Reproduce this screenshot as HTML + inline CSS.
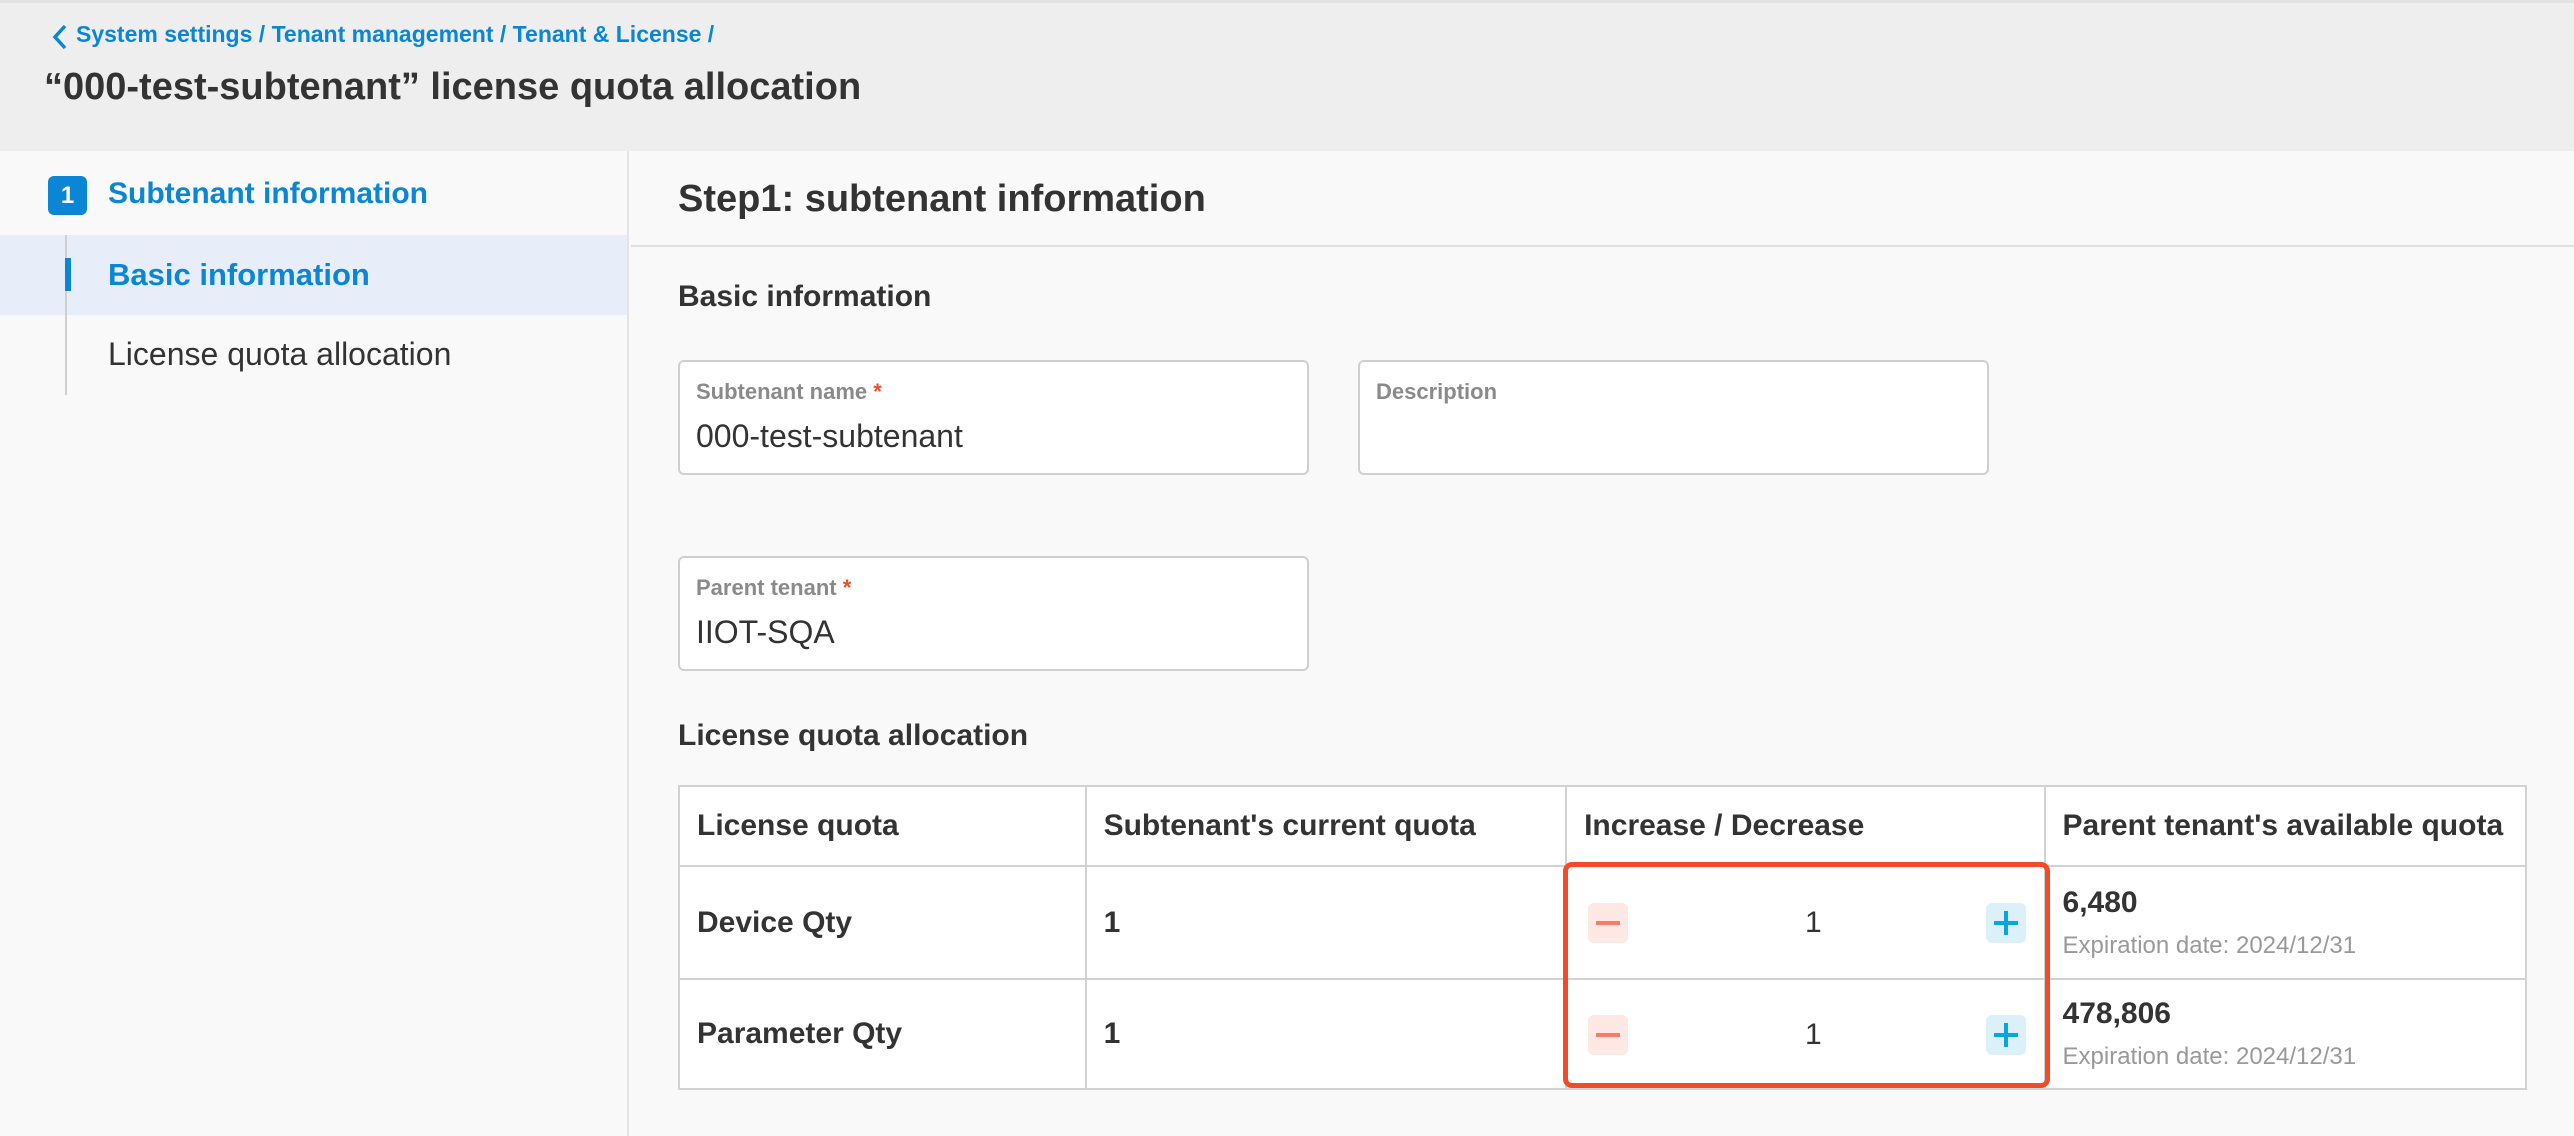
<!DOCTYPE html>
<html><head><meta charset="utf-8"><style>
*{margin:0;padding:0;box-sizing:border-box}
body{width:2574px;height:1136px;background:#f9f9f9;font-family:"Liberation Sans",Arial,sans-serif;position:relative;overflow:hidden;color:#333}
.a{position:absolute;white-space:nowrap}
.hdr{left:0;top:0;width:2574px;height:151px;background:#eeeeee;border-top:3px solid #e2e2e2}
.blue{color:#0a86d4}
.inp{position:absolute;background:#fff;border:2px solid #cfcfcf;border-radius:6px}
.lbl{position:absolute;left:16px;top:17px;font-size:22px;font-weight:bold;color:#8a8a8a}
.val{position:absolute;left:16px;top:56px;font-size:32px;color:#333}
.star{color:#f04e2a}
table{position:absolute;left:678px;top:785px;width:1849px;border-collapse:collapse;background:#fff;font-size:30px}
td{border:2px solid #d2d2d2;padding:0 17px;vertical-align:middle;font-weight:bold;color:#333}
.exp{font-size:24px;font-weight:normal;color:#999;margin-top:12px}
</style></head><body>
<div class="a hdr"></div>
<svg class="a" style="left:50px;top:23px" width="20" height="28" viewBox="0 0 20 28"><path d="M15 3 L5 14 L15 25" stroke="#0a86d4" stroke-width="3.5" fill="none"/></svg>
<div class="a blue" style="left:76px;top:21px;font-size:23px;font-weight:bold">System settings / Tenant management / Tenant &amp; License /</div>
<div class="a" style="left:44px;top:66px;font-size:38px;font-weight:bold;color:#333">“000-test-subtenant” license quota allocation</div>

<div class="a" style="left:0;top:151px;width:629px;height:985px;background:#f9f9f9;border-right:2px solid #e4e4e4"></div>
<div class="a" style="left:48px;top:176px;width:39px;height:39px;background:#0a86d4;border-radius:6px;color:#fff;font-weight:bold;font-size:24px;text-align:center;line-height:39px">1</div>
<div class="a blue" style="left:108px;top:177px;font-size:30px;font-weight:bold">Subtenant information</div>
<div class="a" style="left:0;top:235px;width:627px;height:80px;background:#e8eef9"></div>
<div class="a" style="left:65px;top:235px;width:2px;height:160px;background:#cfcfcf"></div>
<div class="a" style="left:65px;top:258px;width:6px;height:33px;background:#0a86d4"></div>
<div class="a blue" style="left:108px;top:257px;font-size:31px;font-weight:bold">Basic information</div>
<div class="a" style="left:108px;top:336px;font-size:32px;color:#333">License quota allocation</div>

<div class="a" style="left:678px;top:178px;font-size:38px;font-weight:bold">Step1: subtenant information</div>
<div class="a" style="left:631px;top:245px;width:1943px;height:2px;background:#e0e0e0"></div>
<div class="a" style="left:678px;top:280px;font-size:30px;font-weight:bold">Basic information</div>

<div class="inp" style="left:678px;top:360px;width:631px;height:115px"><div class="lbl">Subtenant name <span class="star">*</span></div><div class="val">000-test-subtenant</div></div>
<div class="inp" style="left:1358px;top:360px;width:631px;height:115px"><div class="lbl">Description</div></div>
<div class="inp" style="left:678px;top:556px;width:631px;height:115px"><div class="lbl">Parent tenant <span class="star">*</span></div><div class="val">IIOT-SQA</div></div>

<div class="a" style="left:678px;top:719px;font-size:30px;font-weight:bold">License quota allocation</div>

<table>
<colgroup><col style="width:407px"><col style="width:481px"><col style="width:479px"><col style="width:482px"></colgroup>
<tr style="height:80px"><td>License quota</td><td>Subtenant's current quota</td><td>Increase / Decrease</td><td>Parent tenant's available quota</td></tr>
<tr style="height:113px"><td>Device Qty</td><td>1</td><td></td><td><div>6,480</div><div class="exp">Expiration date: 2024/12/31</div></td></tr>
<tr style="height:110px"><td>Parameter Qty</td><td>1</td><td></td><td><div>478,806</div><div class="exp">Expiration date: 2024/12/31</div></td></tr>
</table>

<div class="a" style="left:1563px;top:862px;width:487px;height:226px;border:5px solid #f24b27;border-radius:9px"></div>
<div class="a" style="left:1588px;top:903px;width:40px;height:40px;background:#fde8e3;border-radius:6px"><div style="position:absolute;left:8px;top:18px;width:24px;height:4px;background:#f87d68"></div></div>
<div class="a" style="left:1986px;top:903px;width:40px;height:40px;background:#dcf0f9;border-radius:6px"><div style="position:absolute;left:8px;top:18px;width:24px;height:4px;background:#0aa5e0"></div><div style="position:absolute;left:18px;top:8px;width:4px;height:24px;background:#0aa5e0"></div></div>
<div class="a" style="left:1805px;top:906px;font-size:30px">1</div>
<div class="a" style="left:1588px;top:1015px;width:40px;height:40px;background:#fde8e3;border-radius:6px"><div style="position:absolute;left:8px;top:18px;width:24px;height:4px;background:#f87d68"></div></div>
<div class="a" style="left:1986px;top:1015px;width:40px;height:40px;background:#dcf0f9;border-radius:6px"><div style="position:absolute;left:8px;top:18px;width:24px;height:4px;background:#0aa5e0"></div><div style="position:absolute;left:18px;top:8px;width:4px;height:24px;background:#0aa5e0"></div></div>
<div class="a" style="left:1805px;top:1018px;font-size:30px">1</div>
</body></html>
